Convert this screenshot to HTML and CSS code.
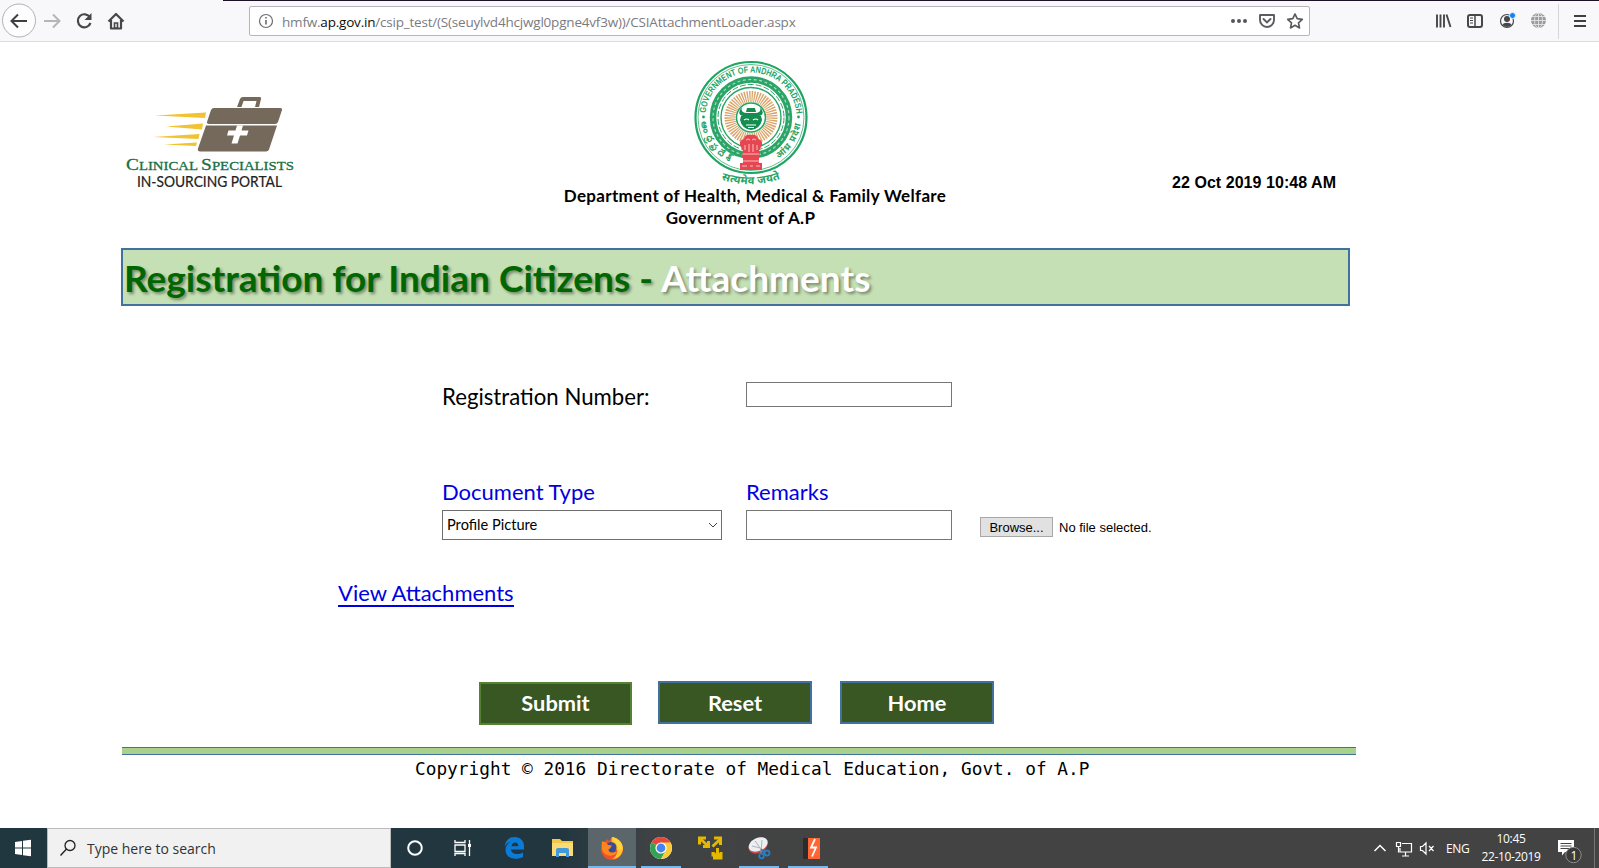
FILE: index.html
```html
<!DOCTYPE html>
<html lang="en">
<head>
<meta charset="utf-8">
<title>Registration for Indian Citizens - Attachments</title>
<link rel="stylesheet" href="styles.css">
</head>
<body>
<header class="toolbar">
  <svg class="nav-icons" width="130" height="41" viewBox="0 0 130 41">
    <circle cx="19" cy="20.500" r="16.500" fill="#fdfdfe" stroke="#b1b1b3"/>
    <path d="M27 21H12M18 14.500L11.500 21l6.500 6.500" fill="none" stroke="#3f3f43" stroke-width="2"/>
    <path d="M44 21h15M53 14.500l6.500 6.500-6.500 6.500" fill="none" stroke="#b5b5b8" stroke-width="2"/>
    <path d="M90 17.500A6.500 6.500 0 1 0 90.500 23" fill="none" stroke="#47474b" stroke-width="2.200"/>
    <path d="M91.500 13v7h-7z" fill="#47474b"/>
    <path d="M108.500 21.500L116 14l7.500 7.500M111 20v8.500h10V20" fill="none" stroke="#47474b" stroke-width="2.200" stroke-linejoin="round"/>
    <path d="M114.500 28v-5h3v5z" fill="none" stroke="#47474b" stroke-width="1.600"/>
  </svg>
  <div class="urlbar">
    <svg width="16" height="16" viewBox="0 0 16 16"><circle cx="8" cy="8" r="6.500" fill="none" stroke="#6d6d70" stroke-width="1.200"/><path d="M8 7v4.500M8 4v1.600" stroke="#6d6d70" stroke-width="1.600"/></svg>
    <span class="url">hmfw.<b>ap.gov.in</b>/csip_test/(S(seuylvd4hcjwgl0pgne4vf3w))/CSIAttachmentLoader.aspx</span>
    <svg class="url-actions" width="76" height="20" viewBox="1229 11 76 20">
      <g fill="#55555a"><circle cx="1233" cy="21" r="2"/><circle cx="1239" cy="21" r="2"/><circle cx="1245" cy="21" r="2"/></g>
      <path d="M1260 15h14v5a7 7 0 0 1-14 0z" fill="none" stroke="#5c5c60" stroke-width="1.900" stroke-linejoin="round"/>
      <path d="M1263.500 19l3.500 3.500 3.500-3.500" fill="none" stroke="#5c5c60" stroke-width="1.900" stroke-linecap="round"/>
      <path d="M1295 14l2.200 4.700 5.100.6-3.800 3.500 1 5.100-4.500-2.600-4.500 2.600 1-5.100-3.800-3.500 5.100-.6z" fill="none" stroke="#5c5c60" stroke-width="1.700" stroke-linejoin="round"/>
    </svg>
  </div>
  <svg class="tool-icons" width="160" height="41" viewBox="1430 0 160 41">
    <path d="M1437 14.500v13M1440.500 14.500v13M1444 14.500v13M1446.500 14.500l4 12.500" stroke="#47474b" stroke-width="1.900" fill="none"/>
    <rect x="1468" y="15" width="14" height="12" rx="2" fill="none" stroke="#47474b" stroke-width="2"/>
    <path d="M1475 15v12" stroke="#47474b" stroke-width="1.500"/><path d="M1470 18h3M1470 20.500h3M1470 23h3" stroke="#47474b"/>
    <circle cx="1507" cy="21" r="6.500" fill="none" stroke="#47474b" stroke-width="1.200"/>
    <circle cx="1507" cy="19" r="3" fill="#47474b"/><path d="M1502.500 25c.5-3 8.500-3 9 0a6 6 0 0 1-9 0z" fill="#47474b"/>
    <circle cx="1512.500" cy="15.500" r="3" fill="#0a84ff" stroke="#f9f9fa" stroke-width=".8"/>
    <circle cx="1538.500" cy="20.500" r="7.500" fill="#9c9c9f"/>
    <path d="M1531 20.500h15M1532 16.500h13M1532 24.500h13M1538.500 13v15" stroke="#e4e4e6" stroke-width=".9"/><ellipse cx="1538.500" cy="20.500" rx="4" ry="7.500" fill="none" stroke="#e4e4e6" stroke-width=".9"/>
    <path d="M1558.500 4v35" stroke="#d7d7db"/>
    <path d="M1574 16h12M1574 21h12M1574 26h12" stroke="#3f3f43" stroke-width="2"/>
  </svg>
</header>

<main class="page">
  <section class="masthead">
    <svg class="portal-logo" width="180" height="110" viewBox="120 88 180 110">
      <g fill="#f1c232"><path d="M155 115.500l51-3-1 5.500z"/><path d="M166 126.500l37-3-1 6z"/><path d="M153 137l46.500-3-1 5z"/><path d="M164 144.500l33-2-1 3.500z"/></g>
      <g fill="#75695b">
        <path d="M237 107l3-8q.7-2 3-2h16.500q2 0 1.500 2l-2 8h-4l1.500-6h-13l-2 6z"/>
        <path d="M214 108h66q2.500 0 2 2l-4 12q-.7 2-3 2h-66q-2.500 0-2-2l4-12q.7-2 3-2z"/>
        <path d="M206 125.500h71l-8 24q-.8 2-3 2h-66q-3 0-2-3z"/>
      </g>
      <path d="M237 125.500h6l-1.500 5h7l-1.500 5h-7l-2.500 8h-6l2.500-8h-7l1.500-5h7z" fill="#fff"/>
      <text x="126" y="170" class="logo-name" textLength="168" lengthAdjust="spacingAndGlyphs"><tspan class="logo-cap">C</tspan>LINICAL <tspan class="logo-cap">S</tspan>PECIALISTS</text>
      <text x="137" y="187" class="logo-sub" textLength="145" lengthAdjust="spacingAndGlyphs">IN-SOURCING PORTAL</text>
    </svg>
    <div class="department">
      <svg width="140" height="137" viewBox="681 50 140 137">
        <defs>
          <path id="arcTop" d="M705.500 116a45.500 44.500 0 0 1 91 0"/>
          <path id="arcRight" d="M773.500 160.500A50 50 0 0 0 801 112"/>
          <path id="arcLeft" d="M701.500 121A50 50 0 0 0 731 161.500"/>
          <path id="arcBottom" d="M712 175Q751 192 790 174"/>
        </defs>
        <circle cx="751" cy="116.500" r="55.500" fill="#fff" stroke="#1fa463" stroke-width="2.200"/>
        <circle cx="751" cy="116.500" r="53" fill="none" stroke="#1fa463" stroke-width=".7"/>
        <circle cx="751" cy="116.500" r="38" fill="none" stroke="#2aa567" stroke-width="6.500"/>
        <circle cx="751" cy="116.500" r="38" fill="none" stroke="#a9dcc2" stroke-width="1.200" stroke-dasharray="3 2.500"/>
        <circle cx="751" cy="116.500" r="33" fill="none" stroke="#2aa567" stroke-width="1" stroke-dasharray="6 2"/>
        <circle cx="751" cy="116.500" r="30" fill="none" stroke="#2aa567" stroke-width="1.400"/>
        <circle cx="751" cy="116.500" r="21" fill="none" stroke="#dba468" stroke-width="11" stroke-dasharray="1.300 1"/>
        <circle cx="751" cy="116.500" r="14.500" fill="#fff" stroke="#1fa463" stroke-width="1.500"/>
        <path d="M742 106q-2 6 5 6h8q7 0 5-6 6 7-1 9h-16q-7-2-1-9zM747 107h8l1 4h-10z" fill="#158c50"/>
        <path d="M741 115h20l1 4q-2 9-11 10-9-1-11-10z" fill="#158c50"/>
        <path d="M744 119q3-2 5 0M753 119q3-2 5 0M746 124h10M748 126.500h6" fill="none" stroke="#fff" stroke-width="1.200"/>
        <g fill="#e64650">
          <path d="M744 138q1-5 7-4 6-1 7 4 5 1 4 6l-3 6 1 6h-18l1-6-3-6q-1-5 4-6z"/>
          <path d="M743 157h16v5h3v7h-22v-7h3z"/>
        </g>
        <path d="M746 139q2-2 4 0M752 139q2-2 4 0M745 144v5M749 143v8M753 143v8M757 144v5M743 153h16M742 160h18M742 165h5M750 165h3M756 165h4" fill="none" stroke="#fff" stroke-width=".9" opacity=".75"/>
        <g fill="#1fa463">
          <text class="seal-en"><textPath href="#arcTop" startOffset="4" textLength="134" lengthAdjust="spacingAndGlyphs">GOVERNMENT OF ANDHRA PRADESH</textPath></text>
          <text class="seal-in"><textPath href="#arcLeft" textLength="50">ఆంధ్రప్రదేశ్</textPath></text>
          <text class="seal-in"><textPath href="#arcRight" startOffset="6" textLength="42">आंध्र प्रदेश</textPath></text>
          <text class="seal-motto"><textPath href="#arcBottom" startOffset="10" textLength="60">सत्यमेव जयते</textPath></text>
          <circle cx="703.500" cy="116" r="1.400"/><circle cx="798.500" cy="116" r="1.400"/>
        </g>
      </svg>
      <div class="dept-name">Department of Health, Medical &amp; Family Welfare</div>
      <div class="dept-gov">Government of A.P</div>
    </div>
    <time class="stamp">22 Oct 2019 10:48 AM</time>
  </section>

  <h1 class="banner"><span class="banner-main">Registration for Indian Citizens -</span><span class="banner-sub">Attachments</span></h1>

  <form class="form">
    <div class="row reg-row">
      <label class="label reg-label">Registration Number:</label>
      <input class="field reg-field" type="text">
    </div>
    <div class="row head-row">
      <span class="label blue doc-label">Document Type</span>
      <span class="label blue rem-label">Remarks</span>
    </div>
    <div class="row doc-row">
      <div class="select"><span>Profile Picture</span><svg width="10" height="6" viewBox="0 0 10 6"><path d="M1 1l4 4 4-4" fill="none" stroke="#444"/></svg></div>
      <input class="field remarks" type="text">
      <button class="browse" type="button">Browse...</button>
      <span class="nofile">No file selected.</span>
    </div>
  </form>
  <div class="view"><a class="view-link" href="#">View Attachments</a></div>
  <div class="actions">
    <button class="btn btn-submit">Submit</button>
    <button class="btn btn-reset">Reset</button>
    <button class="btn btn-home">Home</button>
  </div>
  <div class="rule"></div>
  <footer class="copyright">Copyright © 2016 Directorate of Medical Education, Govt. of A.P</footer>
</main>

<footer class="taskbar">
  <div class="start"><svg width="18" height="18" viewBox="0 0 18 18"><path d="M1 3l7-1v6.500H1zM9 1.800L17 .7v7.800H9zM1 9.500h7V16l-7-1zM9 9.500h8v7.800l-8-1.100z" fill="#fff"/></svg></div>
  <div class="search">
    <svg width="18" height="18" viewBox="0 0 18 18"><circle cx="11" cy="6.500" r="5" fill="none" stroke="#222" stroke-width="1.300"/><path d="M7.500 10L1.500 16.500" stroke="#222" stroke-width="1.400"/></svg>
    <span>Type here to search</span>
  </div>
  <svg class="apps" width="440" height="40" viewBox="391 828 440 40">
    <circle cx="415" cy="848" r="6.800" fill="none" stroke="#fff" stroke-width="2"/>
    <path d="M455 840v2.500h10V840M455 856v-2.500h10V856M455 845h10v6.500h-10zM469.500 840v16" fill="none" stroke="#fff" stroke-width="1.300"/><path d="M468 844h3v3h-3z" fill="#fff"/>
    <path d="M504.500 847c.5-6 4.500-10 10-10 6 0 9.500 4 9.500 9v3.500h-13c.2 4.500 6.500 6 12 3v4.500c-8 4-17.500 1-17.500-7 0-4 2-6.500 5-8-3 .5-5 2.500-6 5zm7 -.8h7c0-5-6.500-5-7 0z" fill="#0b7bd8" fill-rule="evenodd"/>
    <path d="M552 839h8l2 2h11v15h-21z" fill="#f5c748"/><path d="M552 843h21v13h-21z" fill="#fbdb78"/><path d="M556 857v-7q0-2 2-2h9q2 0 2 2v7h-3v-4h-7v4z" fill="#3f9bdc"/>
    <path d="M588 828h48v40h-48z" fill="#5b666b"/>
    <path d="M602 841l3 1 2-3 2 2 3-4c8 2 11 7 11 12a11 11 0 0 1-22 0q0-5 1-8z" fill="#f0502a"/>
    <path d="M612 837c8 2 11 7 11 12-1 7-6 10-11 10 7-4 6-10 2-13-3-3-3-6-2-9z" fill="#ffc12e"/>
    <circle cx="611" cy="847.500" r="5.500" fill="#374c9b"/>
    <path d="M602 842c3-1 5 1 6 3l4 .5-2 3c-3 1-1 4.500 3 4 3 0 4-1 5-2-1 6-13 8-16-1z" fill="#ff861c"/>
    <path d="M612 837c1 5 6 6 6 12l4 1c2-6-3-12-10-13z" fill="#ffd440"/>
    <circle cx="661" cy="848" r="11" fill="#fff"/><path d="M661 848L651.500 842.500A11 11 0 0 1 670.500 842.500z" fill="#e2483b"/><path d="M661 848L651.500 842.500A11 11 0 0 0 661 859l4-7z" fill="#33a352"/><path d="M665 852l-4 7A11 11 0 0 0 670.500 842.500H661z" fill="#f9cb3b"/><circle cx="661" cy="848" r="5.600" fill="#fff"/><circle cx="661" cy="848" r="4.400" fill="#4385ef"/>
    <path d="M700 838.500l8 7.500M721 838.500l-8.500 8M717.500 848v8" fill="none" stroke="#e5b800" stroke-width="3"/>
    <path d="M698 836.500h8v3h-5v5h-3zM714 836.500h8v8.500h-3v-5.500h-5zM703 848h7v-7h-3v4h-4zM711.500 852l3 0 3 3.500 2.500-3.500h2.500v7.500h-9.500v-3h-1.500z" fill="#e5b800"/>
    <ellipse cx="758" cy="846" rx="10" ry="7" transform="rotate(-25 758 846)" fill="#c94a50"/><ellipse cx="758" cy="844.500" rx="10" ry="6.500" transform="rotate(-25 758 844)" fill="#eceff2"/><path d="M755 841l9 12M762 840l-1 13M752 846l8 2" stroke="#a4abb0" stroke-width=".9"/><path d="M761 849l4 5" stroke="#2b7cc0" stroke-width="2"/><circle cx="761.500" cy="856" r="2.300" fill="none" stroke="#2b7cc0" stroke-width="1.800"/><circle cx="767" cy="853" r="2.500" fill="none" stroke="#2b7cc0" stroke-width="1.800"/>
    <path d="M803 838h6v21h-6z" fill="#2c2c2c"/><path d="M808 838h12v21h-12z" fill="#ff6633"/><path d="M815 839l-4 8.500h5l-4 9" fill="none" stroke="#fff" stroke-width="1.800"/>
    <path d="M588 866h48v2h-48zM641 866h40v2h-40zM739 866h40v2h-40zM788 866h40v2h-40z" fill="#76b9ed"/>
  </svg>
  <svg class="tray-icons" width="66" height="40" viewBox="1372 828 66 40">
    <path d="M1374.500 851l5.500-5.500 5.500 5.500" fill="none" stroke="#fff" stroke-width="1.500"/>
    <path d="M1402 843.500h9.500v8.500H1400v-4M1402 856h7M1405.500 852v4M1396.500 842.500h4v4h-4zM1398.500 846.500v6" fill="none" stroke="#fff" stroke-width="1.200"/>
    <path d="M1420.500 846.500h2l3.500-3.500v11l-3.500-3.500h-2zM1429 846l4.500 5M1433.500 846l-4.500 5" fill="none" stroke="#fff" stroke-width="1.200"/>
  </svg>
  <span class="lang">ENG</span>
  <div class="clock"><span>10:45</span><span>22-10-2019</span></div>
  <svg class="notif" width="41" height="40" viewBox="1556 828 41 40">
    <path d="M1558 840h16v12h-9l-3 3.500V852h-4z" fill="#fff"/><path d="M1560.500 843.500h11M1560.500 846h11M1560.500 848.500h11" stroke="#444"/>
    <circle cx="1573.500" cy="855" r="7.700" fill="#3a3a3a" stroke="#8c8c8c"/><text x="1570.500" y="859.500" class="badge">1</text>
    <path d="M1594.500 828v40" stroke="#777"/>
  </svg>
</footer>
</body>
</html>
```
FILE: styles.css
```css
* { box-sizing: border-box; }
body { margin: 0; width: 1599px; height: 868px; overflow: hidden; background: #fff; display: flex; flex-direction: column; font-family: Lato, "Liberation Sans", sans-serif; color: #000; }
svg { display: block; flex: none; }
.toolbar { height: 42px; flex: none; display: flex; align-items: flex-start; background: linear-gradient(#1b1228, #1b1228) 223px 0 / 1376px 1px no-repeat #f8f8fa; border-bottom: 1px solid #dcdce0; }
.urlbar { margin: 6px 120px 0 119px; width: 1061px; height: 30px; border: 1px solid #b6b6ba; border-radius: 2px; background: #fff; display: flex; align-items: center; padding: 0 4px 0 8px; }
.url { margin-left: 8px; padding-top: 2px; font: 13.5px/20px "Open Sans", sans-serif; color: #7b7b7f; letter-spacing: -0.2px; white-space: nowrap; }
.url b { font-weight: 400; color: #0c0c0d; }
.url-actions { margin-left: auto; }
.page { flex: none; height: 786px; display: flex; flex-direction: column; }
.masthead { height: 206px; display: flex; align-items: flex-start; }
.portal-logo { margin: 46px 264px 0 120px; }
.logo-name { font: 13px "Liberation Serif", serif; fill: #187040; stroke: #187040; stroke-width: .3px; }
.logo-cap { font-size: 17px; }
.logo-sub { font: 14.500px Lato, sans-serif; fill: #222; stroke: #222; stroke-width: .2px; }
.department { width: 382px; display: flex; flex-direction: column; align-items: center; padding: 9px 0 0; font-weight: 700; font-size: 17px; line-height: 22px; letter-spacing: .33px; white-space: nowrap; }
.department svg { margin-right: 8px; letter-spacing: 0; }
.dept-name { margin-top: -3px; }
.dept-gov { margin-right: 29px; }
.seal-en { font: 700 9px "Liberation Sans", sans-serif; }
.seal-in { font: 700 9px "Noto Sans", sans-serif; }
.seal-motto { font: 700 11px "Noto Sans", sans-serif; }
.stamp { margin: 131px 0 0 226px; font: 700 16px/20px "Liberation Sans", sans-serif; letter-spacing: .05px; white-space: nowrap; }
.banner { margin: 0 0 0 121px; width: 1229px; height: 58px; flex: none; border: 2px solid #41719c; background: #c5e0b4; font-size: 37px; font-weight: 700; line-height: 44px; padding: 6px 0 0 1px; white-space: nowrap; text-shadow: 2px 2px 3px rgba(0,0,0,.4); display: flex; }
.banner-main { width: 537px; color: #060; }
.banner-sub { color: #fff; }
.form { padding: 76px 0 0 442px; }
.row { display: flex; }
.label { font-size: 22px; line-height: 28px; white-space: nowrap; }
.blue { color: #0000e0; }
.reg-row { height: 96px; }
.reg-label { width: 304px; padding-top: 1px; font-size: 22.2px; }
.field { margin: 0; border: 1px solid #767676; background: #fff; width: 206px; padding: 0; }
.reg-field { height: 25px; }
.head-row { height: 32px; }
.doc-label { width: 304px; }
.doc-row { height: 30px; }
.select { width: 280px; height: 30px; border: 1px solid #6e6e6e; display: flex; align-items: center; justify-content: space-between; padding: 0 3px 0 4px; margin-right: 24px; font-size: 14.600px; }
.select span { padding-bottom: 2px; }
.remarks { height: 30px; }
.browse { margin: 7px 6px 0 28px; width: 73px; height: 20px; padding: 2px 0 0; border: 1px solid #a8a8a8; background: #e1e1e1; font: 13px/16px "Liberation Sans", sans-serif; }
.nofile { padding-top: 10px; font: 13px/16px "Liberation Sans", sans-serif; }
.view { margin: 39px 0 0 338px; height: 30px; }
.view-link { display: inline-block; height: 28px; font-size: 22px; line-height: 28px; color: #0000e0; text-decoration: none; border-bottom: 2px solid #0000e0; }
.actions { margin: 72px 0 0 479px; display: flex; height: 66px; }
.btn { width: 154px; height: 43px; padding: 0; border: 2px solid #41719c; background: #385723; color: #fff; font: 700 21.800px/30px Lato, sans-serif; }
.btn-submit { width: 153px; margin-top: 1px; padding-bottom: 2px; border-color: #548235; }
.btn-reset { margin: 0 28px 0 26px; }
.rule { margin-left: 122px; width: 1234px; height: 8px; background: #a9d18e; border: solid #41719c; border-width: 1px 0; }
.copyright { margin: 3px 0 0 415px; font: 17.800px/22px "DejaVu Sans Mono", monospace; white-space: nowrap; }
.taskbar { height: 40px; flex: none; display: flex; align-items: center; background: linear-gradient(90deg, #213740 0, #22363f 560px, #3e4244 650px, #434343 800px); color: #fff; font-family: "Open Sans", sans-serif; font-size: 12px; }
.start { width: 47px; padding-left: 14px; }
.search { width: 344px; height: 40px; background: #f1f1f1; border: 1px solid #bbb; color: #333; display: flex; align-items: center; gap: 10px; padding-left: 11px; font-size: 14px; }
.tray-icons { margin-left: 541px; }
.lang { margin-left: 8px; width: 32px; letter-spacing: -.3px; }
.clock { width: 66px; display: flex; flex-direction: column; align-items: center; line-height: 18px; letter-spacing: -.35px; }
.notif { margin-left: 12px; }
.badge { font: 12px "Open Sans", sans-serif; fill: #fff; }
```
